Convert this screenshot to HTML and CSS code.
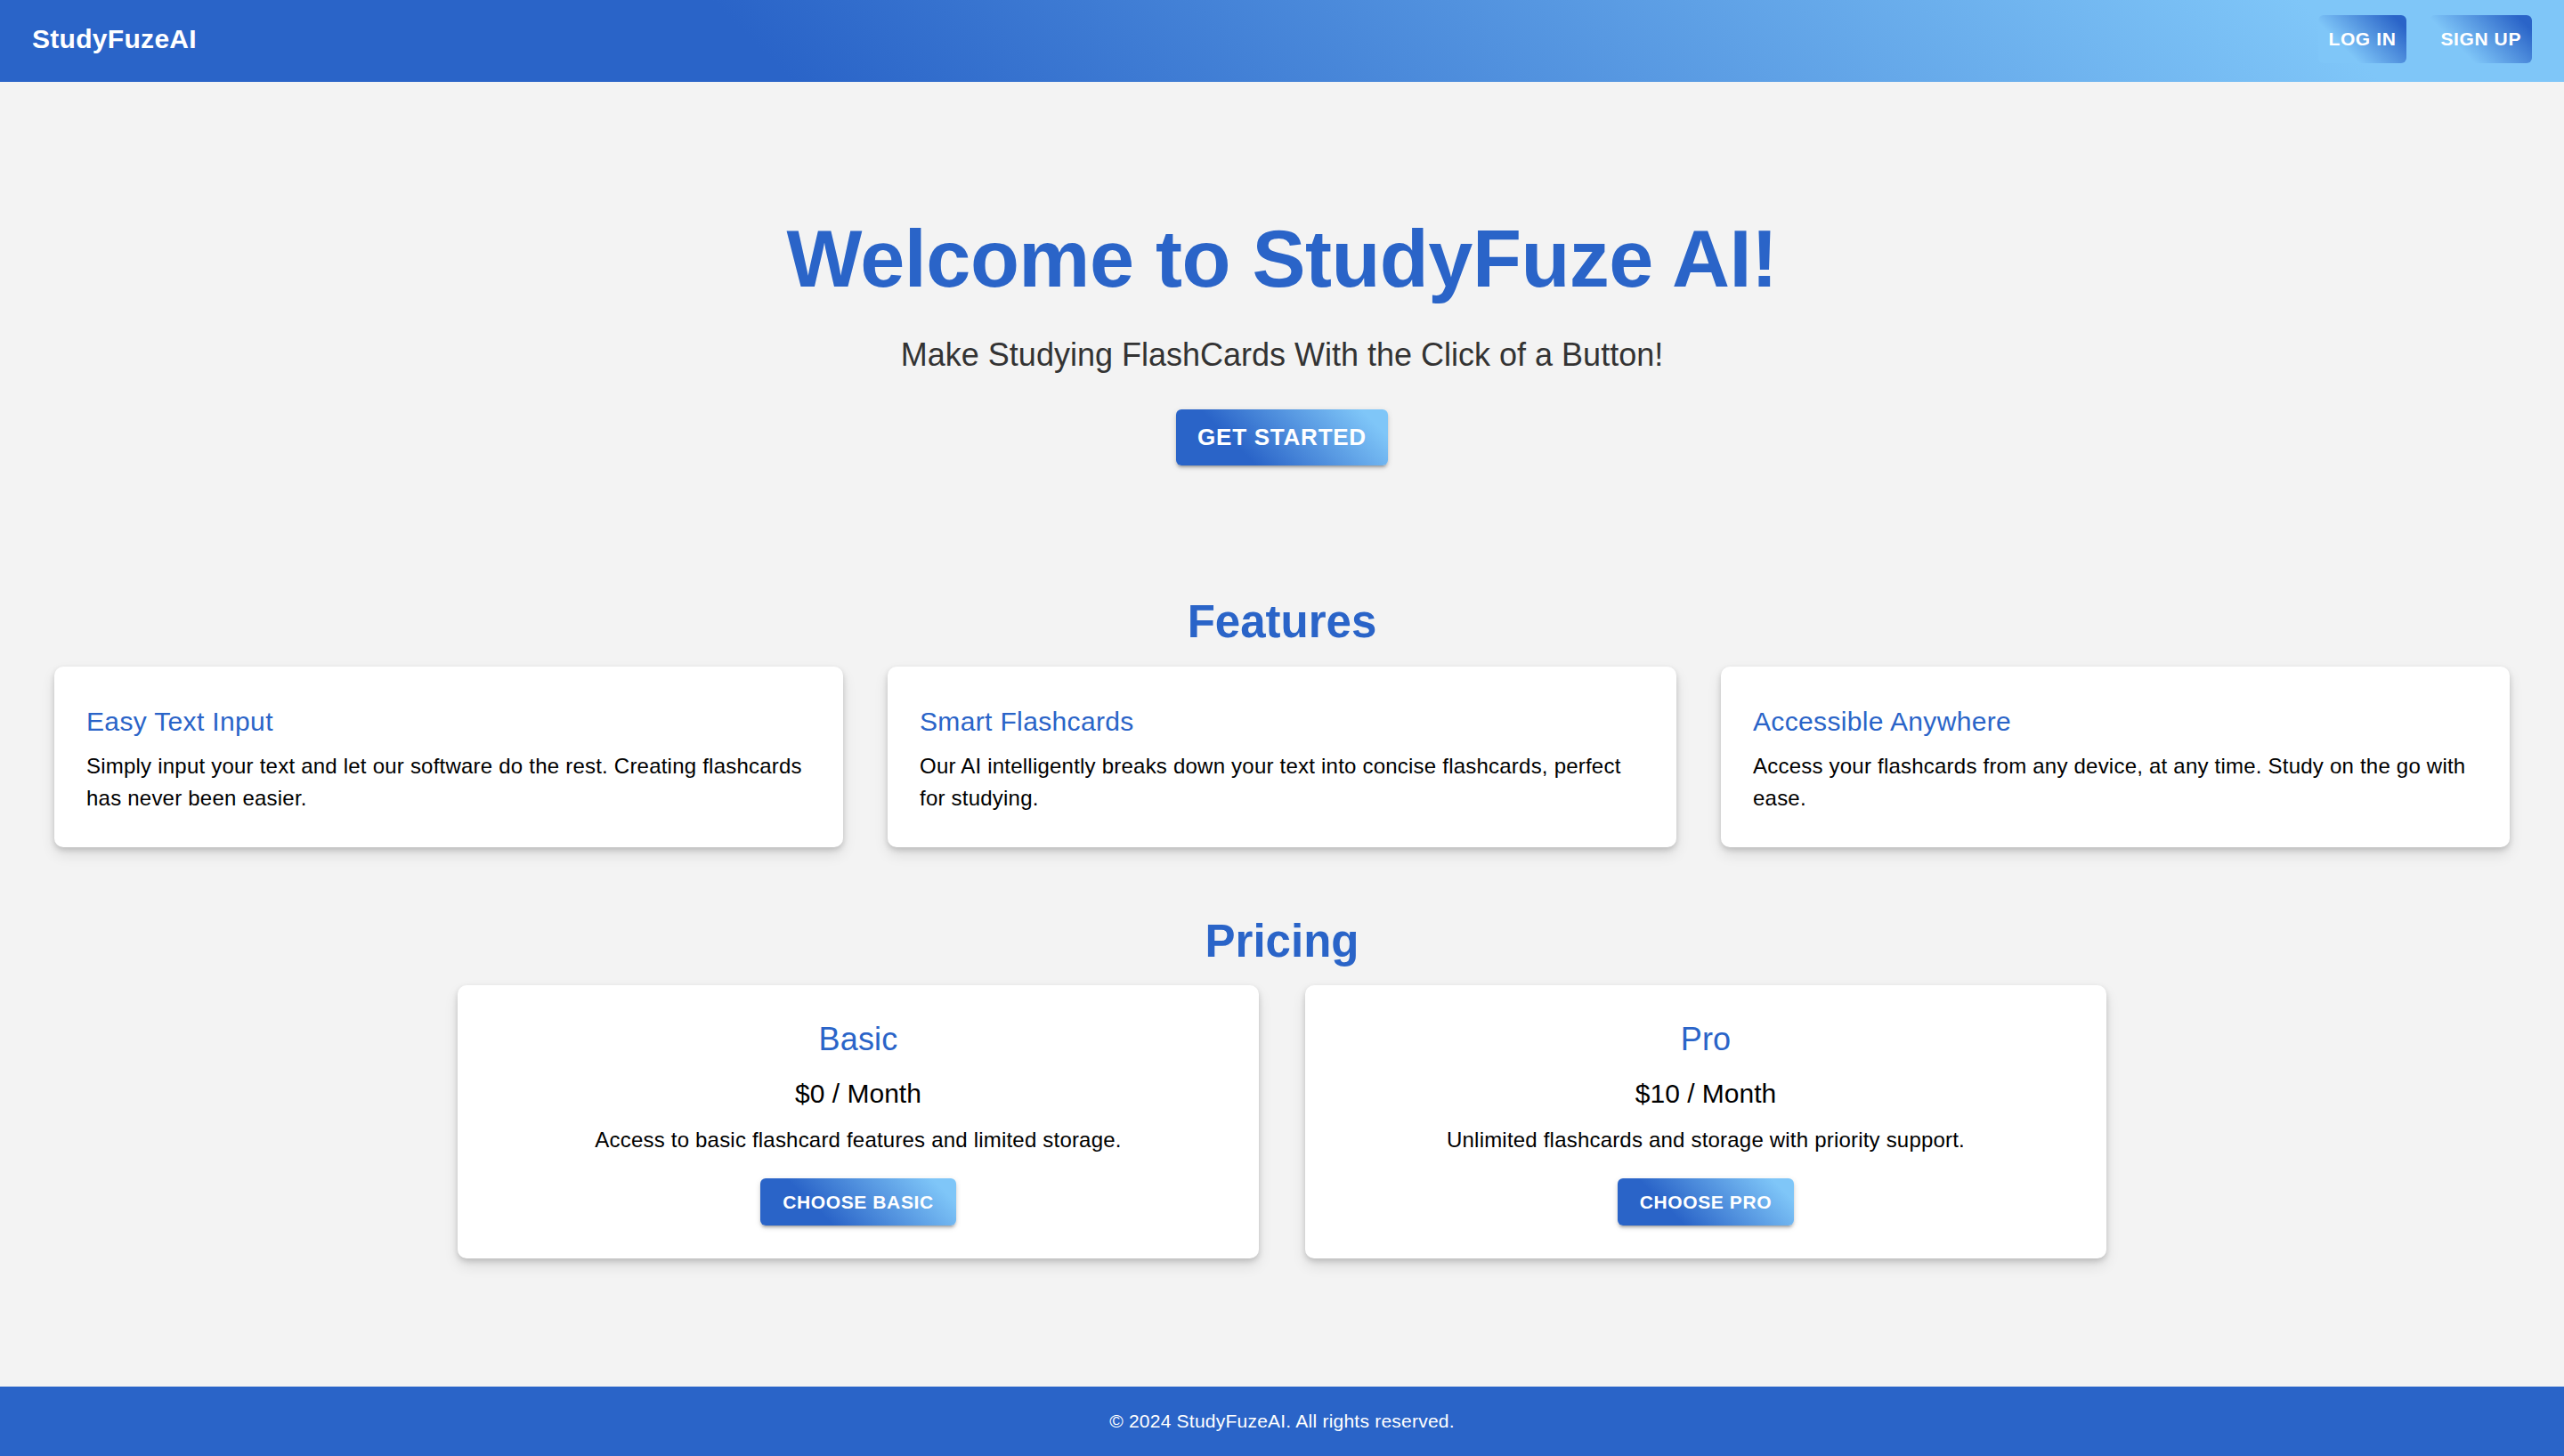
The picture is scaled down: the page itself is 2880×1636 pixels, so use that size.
FILE: index.html
```html
<!DOCTYPE html>
<html lang="en">
<head>
<meta charset="utf-8">
<title>StudyFuzeAI</title>
<link rel="stylesheet" href="styles.css">
</head>
<body>
<div class="page">
  <header class="appbar">
    <div class="logo">StudyFuzeAI</div>
    <nav class="nav">
      <button class="nav-btn">Log In</button>
      <button class="nav-btn">Sign Up</button>
    </nav>
  </header>

  <main class="main">
    <section class="hero">
      <h1 class="hero-title">Welcome to StudyFuze AI!</h1>
      <p class="hero-sub">Make Studying FlashCards With the Click of a Button!</p>
      <button class="grad-btn grad-btn-lg">Get Started</button>
    </section>

    <section class="features">
      <h2 class="section-title">Features</h2>
      <div class="feature-grid">
        <div class="card feature-card">
          <h3 class="feature-title">Easy Text Input</h3>
          <p class="feature-text">Simply input your text and let our software do the rest. Creating flashcards has never been easier.</p>
        </div>
        <div class="card feature-card">
          <h3 class="feature-title">Smart Flashcards</h3>
          <p class="feature-text">Our AI intelligently breaks down your text into concise flashcards, perfect for studying.</p>
        </div>
        <div class="card feature-card">
          <h3 class="feature-title">Accessible Anywhere</h3>
          <p class="feature-text">Access your flashcards from any device, at any time. Study on the go with ease.</p>
        </div>
      </div>
    </section>

    <section class="pricing">
      <h2 class="section-title pricing-title">Pricing</h2>
      <div class="pricing-row">
        <div class="card price-card">
          <h3 class="plan-name">Basic</h3>
          <div class="plan-price">$0 / Month</div>
          <p class="plan-desc">Access to basic flashcard features and limited storage.</p>
          <button class="grad-btn grad-btn-md">Choose Basic</button>
        </div>
        <div class="card price-card">
          <h3 class="plan-name">Pro</h3>
          <div class="plan-price">$10 / Month</div>
          <p class="plan-desc">Unlimited flashcards and storage with priority support.</p>
          <button class="grad-btn grad-btn-md">Choose Pro</button>
        </div>
      </div>
    </section>
  </main>

  <footer class="footer">© 2024 StudyFuzeAI. All rights reserved.</footer>
</div>
</body>
</html>
```

FILE: styles.css
```css
* {
  box-sizing: border-box;
}

html, body {
  margin: 0;
  padding: 0;
}

body {
  font-family: "Liberation Sans", Arial, Helvetica, sans-serif;
  background: #f3f3f3;
  color: #000;
}

.page {
  min-height: 100vh;
  display: flex;
  flex-direction: column;
}

h1, h2, h3, p {
  margin: 0;
}

button {
  font-family: inherit;
  border: 0;
  cursor: pointer;
}

/* Header */
.appbar {
  height: 92px;
  padding: 0 36px 4px 36px;
  display: flex;
  align-items: center;
  justify-content: space-between;
  background: linear-gradient(45deg, #2a64c8 30%, #7fc6f8 90%);
  color: #fff;
}

.logo {
  font-size: 30px;
  font-weight: 700;
  line-height: 48px;
  letter-spacing: 0.3px;
}

.nav {
  display: flex;
  gap: 26px;
}

.nav-btn {
  color: #fff;
  font-size: 21px;
  font-weight: 700;
  letter-spacing: 0.6px;
  text-transform: uppercase;
  line-height: 36px;
  padding: 9px 12px;
  border-radius: 6px;
  background: linear-gradient(45deg, #7fc6f8 30%, #2a64c8 90%);
}

/* Main */
.main {
  flex: 1;
}

.hero {
  padding-top: 145px;
  display: flex;
  flex-direction: column;
  align-items: center;
  text-align: center;
}

.hero-title {
  font-size: 90px;
  font-weight: 700;
  line-height: 108px;
  letter-spacing: -0.5px;
  color: #2a64c8;
}

.hero-sub {
  margin-top: 30px;
  font-size: 36px;
  line-height: 48px;
  color: #333;
}

.grad-btn {
  color: #fff;
  font-weight: 700;
  text-transform: uppercase;
  border-radius: 6px;
  background: linear-gradient(45deg, #2a64c8 30%, #7fc6f8 90%);
  box-shadow: 0 4px 2px -3px rgba(0, 0, 0, 0.2), 0 3px 3px 0 rgba(0, 0, 0, 0.14), 0 2px 7px 0 rgba(0, 0, 0, 0.12);
}

.grad-btn-lg {
  margin-top: 37px;
  font-size: 26px;
  line-height: 45px;
  letter-spacing: 0.75px;
  padding: 9px 24px;
}

.grad-btn-md {
  margin-top: 25px;
  font-size: 21px;
  line-height: 35px;
  letter-spacing: 0.6px;
  padding: 9px 25px;
}

/* Sections */
.features {
  padding-top: 144px;
}

.section-title {
  text-align: center;
  font-size: 51px;
  font-weight: 700;
  line-height: 63px;
  color: #2a64c8;
}

.feature-grid {
  margin-top: 19px;
  padding: 0 61px;
  display: grid;
  grid-template-columns: repeat(3, 1fr);
  gap: 50px;
}

.card {
  background: #fff;
  border-radius: 10px;
  box-shadow: 0 3px 6px rgba(0, 0, 0, 0.16), 0 8px 16px rgba(0, 0, 0, 0.10);
}

.feature-card {
  padding: 38px 36px 37px 36px;
}

.feature-title {
  font-size: 30px;
  font-weight: 400;
  line-height: 48px;
  letter-spacing: 0.35px;
  color: #2a64c8;
}

.feature-text {
  margin-top: 8px;
  font-size: 24px;
  line-height: 36px;
  letter-spacing: 0.22px;
  color: #000;
}

.pricing {
  padding-top: 74px;
}

.pricing-row {
  margin-top: 18px;
  display: flex;
  justify-content: center;
  gap: 52px;
}

.price-card {
  width: 900px;
  padding: 37px 36px 37px 36px;
  display: flex;
  flex-direction: column;
  align-items: center;
  text-align: center;
}

.plan-name {
  font-size: 36px;
  font-weight: 400;
  line-height: 48px;
  letter-spacing: 0.2px;
  color: #2a64c8;
}

.plan-price {
  margin-top: 13px;
  font-size: 30px;
  line-height: 48px;
  color: #000;
}

.plan-desc {
  margin-top: 10px;
  font-size: 24px;
  line-height: 36px;
  letter-spacing: 0.2px;
  color: #000;
}

/* Footer */
.footer {
  background: #2a64c8;
  color: #fff;
  text-align: center;
  font-size: 21px;
  line-height: 30px;
  letter-spacing: 0.23px;
  padding: 24px 0;
}
```
